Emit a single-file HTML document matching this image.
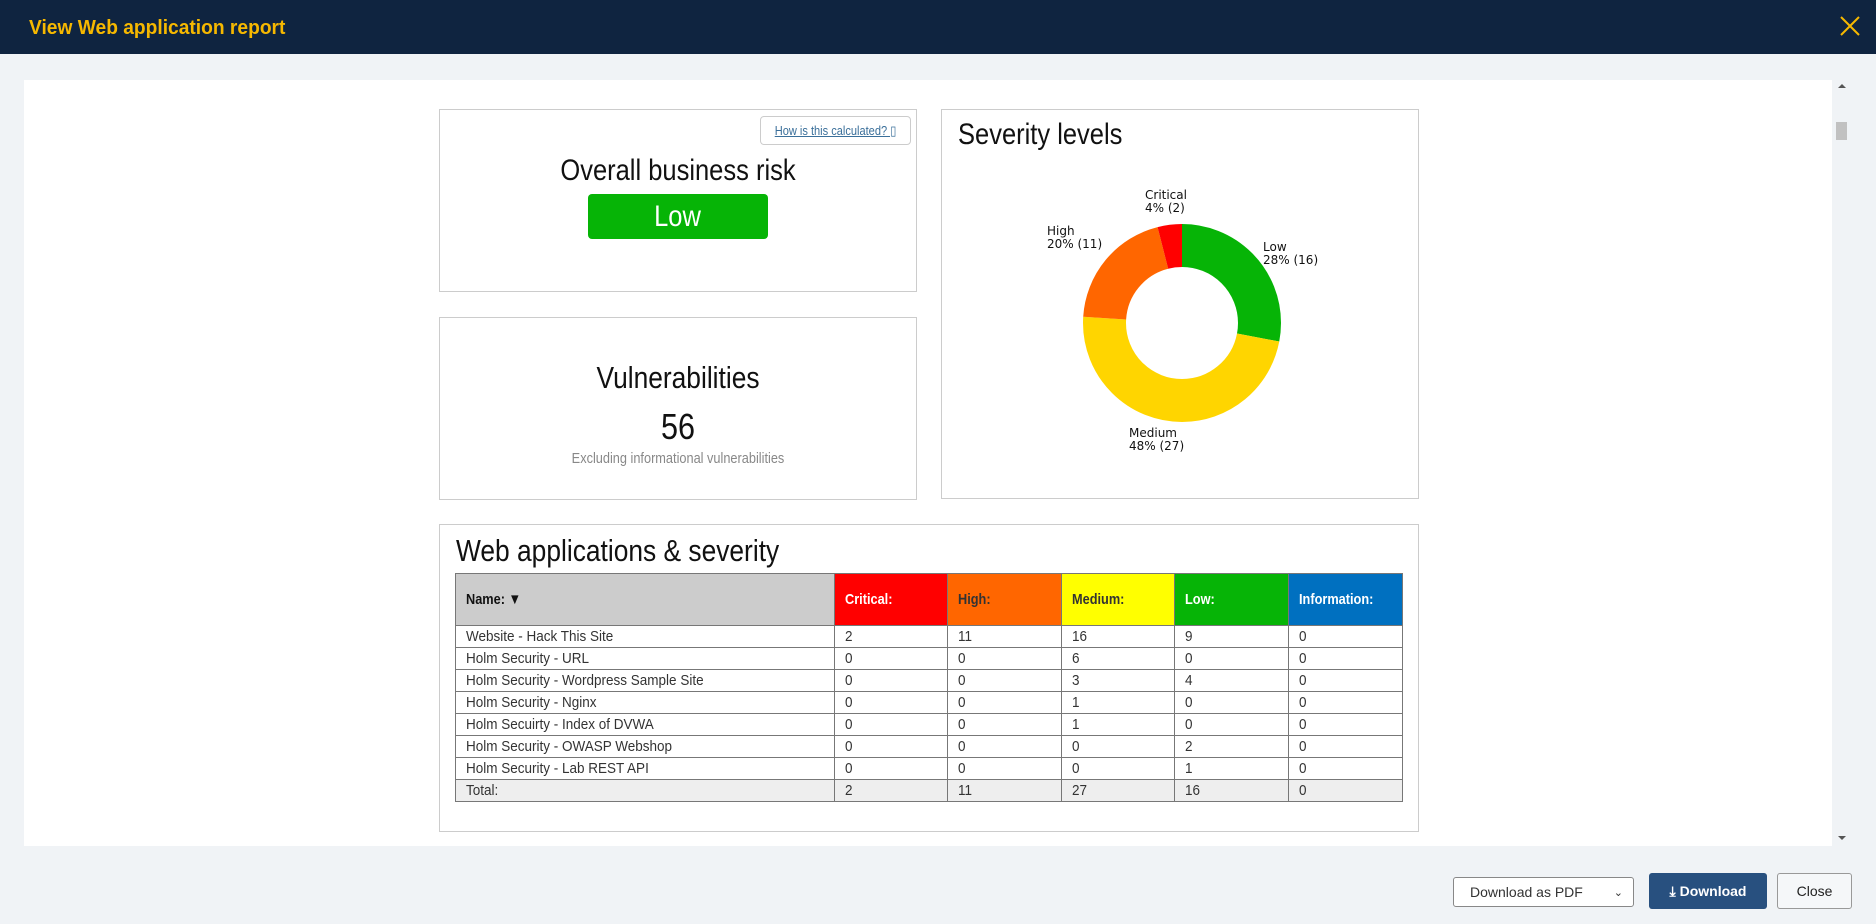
<!DOCTYPE html>
<html><head><meta charset="utf-8"><style>
*{box-sizing:border-box;margin:0;padding:0}
body{width:1876px;height:924px;background:#f0f3f6;position:relative;overflow:hidden;font-family:"Liberation Sans",sans-serif;color:#111}
.hdr{position:absolute;left:0;top:0;width:1876px;height:54px;background:#0f2440}
.hdr .t{position:absolute;left:29px;top:17px;color:#f6b800;font:bold 20px "Liberation Sans",sans-serif;transform:scaleX(.96);transform-origin:left}
.hdr .x{position:absolute;left:1838px;top:14px;width:24px;height:24px}
.content{position:absolute;left:24px;top:80px;width:1808px;height:766px;background:#fff}
.sb{position:absolute;left:1832px;top:80px;width:19px;height:766px;background:#f0f3f6}
.box{position:absolute;border:1px solid #ccc;background:#fff}
.c{position:absolute;left:0;right:0;text-align:center;transform:scaleX(.85)}
.n{display:inline-block;transform:scaleX(.85);transform-origin:left;white-space:nowrap}
.m{display:inline-block;transform:scaleX(.9);transform-origin:left;white-space:nowrap}
table{position:absolute;left:455px;top:573px;width:948px;border-collapse:collapse;font-size:15px;table-layout:fixed}
td,th{border:1px solid #777;padding:0 10px;text-align:left;height:22px;font-weight:normal;color:#333;overflow:hidden}
th{height:52px;font-weight:bold}
.btn{position:absolute;border-radius:3px;font:16px "Liberation Sans",sans-serif;display:flex;align-items:center;justify-content:center}
</style></head><body>
<div class="hdr"><div class="t">View Web application report</div>
<svg class="x" viewBox="0 0 24 24"><path d="M3 3L21 21M21 3L3 21" stroke="#f6b800" stroke-width="2"/></svg></div>
<div class="content"></div>
<div class="sb"><div style="position:absolute;left:6px;top:4px;width:0;height:0;border:4px solid transparent;border-bottom-color:#555;border-top:0"></div><div style="position:absolute;left:4px;top:42px;width:11px;height:18px;background:#c1c1c1"></div><div style="position:absolute;left:6px;top:756px;border:4px solid transparent;border-top-color:#555;border-bottom:0"></div></div>

<div class="box" style="left:439px;top:109px;width:478px;height:183px">
 <div style="position:absolute;left:320px;top:6px;width:151px;height:29px;border:1px solid #ccc;border-radius:4px;font-size:13px;color:#3a6f9a;display:flex;align-items:center;justify-content:center"><span class="n" style="transform-origin:center;text-decoration:underline">How is this calculated? ▯</span></div>
 <div class="c" style="top:44px;font-size:30px">Overall business risk</div>
 <div style="position:absolute;left:148px;top:84px;width:180px;height:45px;background:#06b406;border-radius:4px;color:#fff;font-size:30px;text-align:center;line-height:45px"><span style="display:inline-block;transform:scaleX(.85)">Low</span></div>
</div>
<div class="box" style="left:439px;top:317px;width:478px;height:183px">
 <div class="c" style="top:42px;font-size:31px">Vulnerabilities</div>
 <div class="c" style="top:88px;font-size:36px">56</div>
 <div class="c" style="top:132px;font-size:15px;color:#888">Excluding informational vulnerabilities</div>
</div>
<div class="box" style="left:941px;top:109px;width:478px;height:390px">
 <div class="n" style="position:absolute;left:16px;top:8px;font-size:30px">Severity levels</div>
</div>
<svg style="position:absolute;left:0;top:0" width="1876" height="924">
 <g transform="translate(1182,323) rotate(-90)" fill="none" stroke-width="43">
  <circle r="77.5" stroke="#06b406" stroke-dasharray="136.3 600" />
  <circle r="77.5" stroke="#ffd500" stroke-dasharray="0 136.3 233.7 600" />
  <circle r="77.5" stroke="#ff6600" stroke-dasharray="0 370 97.4 600" />
  <circle r="77.5" stroke="#ff0000" stroke-dasharray="0 467.4 19.5 600" />
 </g>
 <g font-family="DejaVu Sans,sans-serif" font-size="12" fill="#111">
  <text x="1145" y="199">Critical</text><text x="1145" y="212">4% (2)</text>
  <text x="1047" y="235">High</text><text x="1047" y="248">20% (11)</text>
  <text x="1263" y="251">Low</text><text x="1263" y="264">28% (16)</text>
  <text x="1129" y="437">Medium</text><text x="1129" y="450">48% (27)</text>
 </g>
</svg>
<div class="box" style="left:439px;top:524px;width:980px;height:308px">
 <div class="n" style="position:absolute;left:16px;top:8px;font-size:31px">Web applications &amp; severity</div>
</div>
<table>
<colgroup><col style="width:379px"><col style="width:113px"><col style="width:114px"><col style="width:113px"><col style="width:114px"><col></colgroup>
<tr><th style="background:#ccc;color:#111"><span class="n">Name: ▼</span></th><th style="background:#f00;color:#fff"><span class="n">Critical:</span></th><th style="background:#f60"><span class="n">High:</span></th><th style="background:#ff0"><span class="n">Medium:</span></th><th style="background:#06b406;color:#fff"><span class="n">Low:</span></th><th style="background:#0070c0;color:#fff"><span class="n">Information:</span></th></tr>
<tr><td><span class="m">Website - Hack This Site</span></td><td><span class="m">2</span></td><td><span class="m">11</span></td><td><span class="m">16</span></td><td><span class="m">9</span></td><td><span class="m">0</span></td></tr>
<tr><td><span class="m">Holm Security - URL</span></td><td><span class="m">0</span></td><td><span class="m">0</span></td><td><span class="m">6</span></td><td><span class="m">0</span></td><td><span class="m">0</span></td></tr>
<tr><td><span class="m">Holm Security - Wordpress Sample Site</span></td><td><span class="m">0</span></td><td><span class="m">0</span></td><td><span class="m">3</span></td><td><span class="m">4</span></td><td><span class="m">0</span></td></tr>
<tr><td><span class="m">Holm Security - Nginx</span></td><td><span class="m">0</span></td><td><span class="m">0</span></td><td><span class="m">1</span></td><td><span class="m">0</span></td><td><span class="m">0</span></td></tr>
<tr><td><span class="m">Holm Secuirty - Index of DVWA</span></td><td><span class="m">0</span></td><td><span class="m">0</span></td><td><span class="m">1</span></td><td><span class="m">0</span></td><td><span class="m">0</span></td></tr>
<tr><td><span class="m">Holm Security - OWASP Webshop</span></td><td><span class="m">0</span></td><td><span class="m">0</span></td><td><span class="m">0</span></td><td><span class="m">2</span></td><td><span class="m">0</span></td></tr>
<tr><td><span class="m">Holm Security - Lab REST API</span></td><td><span class="m">0</span></td><td><span class="m">0</span></td><td><span class="m">0</span></td><td><span class="m">1</span></td><td><span class="m">0</span></td></tr>
<tr style="background:#eee"><td><span class="m">Total:</span></td><td><span class="m">2</span></td><td><span class="m">11</span></td><td><span class="m">27</span></td><td><span class="m">16</span></td><td><span class="m">0</span></td></tr>
</table>
<div class="btn" style="left:1453px;top:877px;width:181px;height:30px;border:1px solid #888;background:#fff;justify-content:space-between;padding:0 10px 0 16px;font-size:14px;color:#333">Download as PDF<span style="font-size:11px">⌄</span></div>
<div class="btn" style="left:1649px;top:873px;width:118px;height:36px;background:#28507f;color:#fff;font-weight:bold;font-size:14px">⤓ Download</div>
<div class="btn" style="left:1777px;top:873px;width:75px;height:36px;border:1px solid #999;background:#f5f7f9;color:#222;font-size:14px">Close</div>
</body></html>
